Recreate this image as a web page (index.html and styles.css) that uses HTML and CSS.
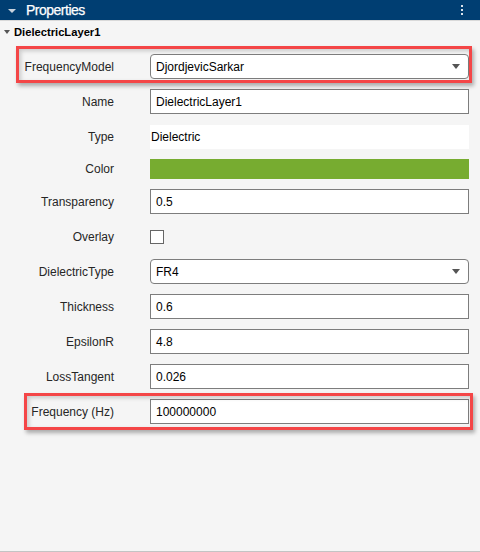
FILE: index.html
```html
<!DOCTYPE html>
<html>
<head>
<meta charset="utf-8">
<link rel="stylesheet" href="styles.css">
</head>
<body>
<div class="panel">
  <div class="header">
    <span class="tri tri-light"></span>
    <span class="header-title">Properties</span>
    <span class="kebab"><i></i><i></i><i></i></span>
  </div>
  <div class="group-title">
    <span class="tri tri-dark"></span>
    <span>DielectricLayer1</span>
  </div>
  <div class="rows">
    <div class="row">
      <span class="hl hl-a"></span>
      <label class="lbl">FrequencyModel</label>
      <div class="ctl dropdown"><span>DjordjevicSarkar</span><span class="arrow"></span></div>
    </div>
    <div class="row">
      <label class="lbl">Name</label>
      <div class="ctl field">DielectricLayer1</div>
    </div>
    <div class="row">
      <label class="lbl">Type</label>
      <div class="ctl static">Dielectric</div>
    </div>
    <div class="row row-short">
      <label class="lbl">Color</label>
      <div class="ctl swatch"></div>
    </div>
    <div class="row">
      <label class="lbl">Transparency</label>
      <div class="ctl field">0.5</div>
    </div>
    <div class="row">
      <label class="lbl">Overlay</label>
      <div class="ctl-check"><span class="check"></span></div>
    </div>
    <div class="row">
      <label class="lbl">DielectricType</label>
      <div class="ctl dropdown"><span>FR4</span><span class="arrow"></span></div>
    </div>
    <div class="row">
      <label class="lbl">Thickness</label>
      <div class="ctl field">0.6</div>
    </div>
    <div class="row">
      <label class="lbl">EpsilonR</label>
      <div class="ctl field">4.8</div>
    </div>
    <div class="row">
      <label class="lbl">LossTangent</label>
      <div class="ctl field">0.026</div>
    </div>
    <div class="row">
      <span class="hl hl-b"></span>
      <label class="lbl">Frequency (Hz)</label>
      <div class="ctl field">100000000</div>
    </div>
  </div>
</div>
</body>
</html>
```
FILE: styles.css
```css
* { box-sizing: border-box; }
html, body { margin: 0; padding: 0; }
body {
  background: #f5f5f5;
  font-family: "Liberation Sans", Arial, sans-serif;
  font-size: 12px;
  color: #1a1a1a;
}
.panel {
  width: 480px;
  height: 552px;
  border-bottom: 1px solid #c4c4c4;
  overflow: hidden;
}
.header {
  height: 21px;
  background: #003e72;
  border-bottom: 1px solid #d9d9d9;
  display: flex;
  align-items: center;
  padding-left: 8px;
  color: #fff;
}
.tri {
  width: 0;
  height: 0;
  border-left: 4px solid transparent;
  border-right: 4px solid transparent;
  border-top: 4px solid #ccc;
}
.tri-light { border-top-color: #c9d3de; margin-top: 1px; }
.header-title {
  margin-left: 10px;
  font-size: 14px;
  font-weight: normal;
  letter-spacing: -0.5px;
  -webkit-text-stroke: 0.25px #fff;
}
.kebab {
  margin-left: auto;
  margin-right: 17px;
  display: flex;
  flex-direction: column;
  gap: 2px;
}
.kebab i {
  display: block;
  width: 2px;
  height: 2px;
  background: #d9e2ec;
}
.group-title {
  height: 22px;
  display: flex;
  align-items: center;
  padding-left: 4px;
  font-weight: bold;
  font-size: 11.2px;
  color: #000;
}
.tri-dark {
  border-left-width: 3px;
  border-right-width: 3px;
  border-top: 4px solid #555;
  margin-right: 4px;
}
.rows {
  padding-top: 11px;
  display: flex;
  flex-direction: column;
  gap: 10px;
}
.row {
  position: relative;
  height: 25px;
  display: flex;
  align-items: center;
}
.row-short { height: 20px; }
.lbl {
  width: 114px;
  text-align: right;
  color: #262626;
  flex: none;
}
.ctl {
  margin-left: 36px;
  width: 319px;
  height: 25px;
  flex: none;
  display: flex;
  align-items: center;
  color: #000;
}
.field {
  background: #fff;
  border: 1px solid #7d7d7d;
  padding-left: 5px;
}
.dropdown {
  background: #fff;
  border: 1px solid #7d7d7d;
  border-radius: 4px;
  padding-left: 5px;
  padding-right: 8px;
  justify-content: space-between;
}
.arrow {
  width: 0;
  height: 0;
  border-left: 4px solid transparent;
  border-right: 4px solid transparent;
  border-top: 5px solid #555;
}
.static {
  background: #fff;
  padding-left: 1px;
  height: 24px;
}
.swatch {
  height: 20px;
  background: #77ac30;
}
.ctl-check {
  margin-left: 36px;
  display: flex;
  align-items: center;
  padding-top: 1px;
}
.check {
  display: block;
  width: 14px;
  height: 14px;
  background: #fff;
  border: 1px solid #666;
}
.hl {
  position: absolute;
  border: 3px solid #f44647;
  box-shadow: 2px 3px 4px rgba(0,0,0,0.3), inset 2px 2px 4px rgba(0,0,0,0.18);
  pointer-events: none;
}
.hl-a {
  left: 16px;
  top: -8px;
  width: 456px;
  height: 37px;
}
.hl-b {
  left: 24px;
  top: -6px;
  width: 449px;
  height: 37px;
}
```
